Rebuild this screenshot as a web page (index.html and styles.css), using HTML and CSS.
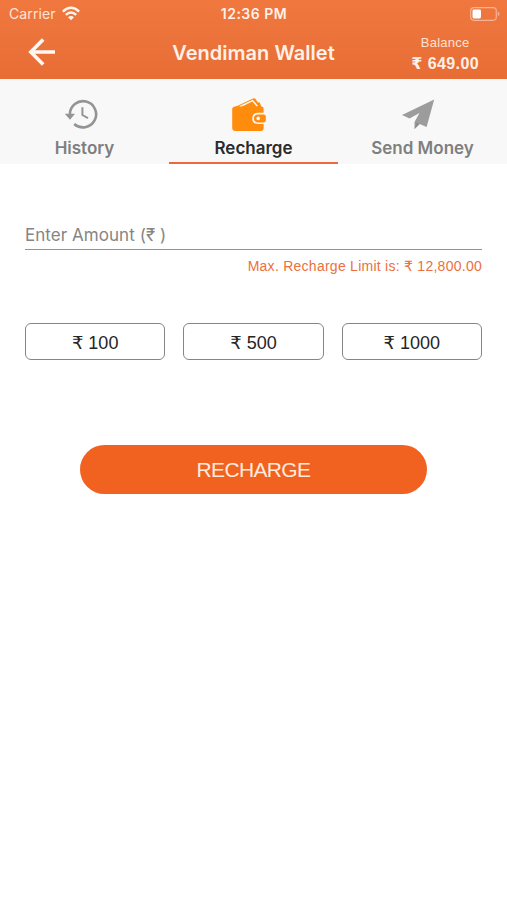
FILE: index.html
```html
<!DOCTYPE html>
<html lang="en">
<head>
<meta charset="utf-8">
<title>Vendiman Wallet</title>
<link rel="stylesheet" href="styles.css">
</head>
<body>
<header class="header">
  <div class="status">
    <div class="carrier"><span class="carrier-name">Carrier</span>
      <svg class="wifi" width="18" height="14" viewBox="0 0 18 14" fill="none" stroke="#fff5ee" stroke-width="2.4"><path d="M.9 4.6Q9-2.9 17.1 4.6M3.8 7.8Q9 3.2 14.2 7.8"/><path d="M6 10.2Q9 7.6 12 10.2L9 13.3Z" fill="#fff5ee" stroke="none"/></svg>
    </div>
    <time class="clock">12:36 PM</time>
    <svg class="battery" width="30" height="14" viewBox="0 0 30 14"><rect x=".7" y=".7" width="25.6" height="12.6" rx="3.2" fill="none" stroke="#f7b393" stroke-width="1.2"/><rect x="2.5" y="2.5" width="8.5" height="9" rx="1.4" fill="#fff"/><path d="M27.8 4.6Q31.2 7 27.8 9.4Z" fill="#f7b393"/></svg>
  </div>
  <div class="nav">
    <svg class="back" width="28" height="28" viewBox="0 0 28 28" fill="none" stroke="#fff7f2" stroke-width="3.6"><path d="M15.2 1.6 2.8 14 15.2 26.4M3 14H27"/></svg>
    <h1 class="title">Vendiman Wallet</h1>
    <div class="balance"><span class="balance-label">Balance</span><span class="balance-value">₹ 649.00</span></div>
  </div>
</header>
<nav class="tabs">
  <div class="tab">
    <svg class="icon history-icon" width="34" height="34" viewBox="0 0 34 34" fill="none" stroke="#949494" stroke-width="2.6"><path d="M5.9 17.4A13.1 13.1 0 1 1 10.2 27"/><path d="M.8 16.8H11L6 22.8Z" fill="#949494" stroke="none"/><path d="M18.4 10.3V18L24 21.2" stroke-width="2"/></svg>
    <span class="tab-label history-label">History</span>
  </div>
  <div class="tab active">
    <svg class="icon wallet-icon" width="34" height="34" viewBox="0 0 34 34"><path d="M3 10 21 1.4Q22.6.7 23.6 2L25.6 5.2 27.8 5.4 29.5 10Z" fill="#ff8c0c"/><path d="M7.6 9.8 20.6 3.6 25.4 9.2" fill="none" stroke="#f8f8f8" stroke-width="1.5"/><path d="M3.5 9.6H29Q31.6 9.6 31.6 12V31.2Q31.6 33.9 29 33.9H3.5Q.2 33.9.2 30.7V12.6Q.2 9.6 3.5 9.6Z" fill="#ff8c0c"/><path d="M34 15.8H25.8Q20.3 16 20.3 21.4T25.8 27H34Z" fill="#f8f8f8"/><path d="M31.8 17.4H26Q21.9 17.5 21.9 21.4T26 25.4H31.8Q33.8 25.4 33.8 23.4V19.4Q33.8 17.4 31.8 17.4Z" fill="#ff8c0c"/><circle cx="26.2" cy="21.4" r="1.8" fill="#f8f8f8"/></svg>
    <span class="tab-label recharge-label">Recharge</span>
  </div>
  <div class="tab">
    <svg class="icon plane-icon" width="34" height="34" viewBox="0 0 34 34"><path d="M32.2 2.6 24.6 30 17.6 26.9 12.5 32V25L17.5 16 7.5 21.5 0 18.1Z" fill="#9c9c9c"/><path d="M12.5 32 17.6 26.9 14.5 25.5Z" fill="#8d8d8d"/></svg>
    <span class="tab-label send-label">Send Money</span>
  </div>
</nav>
<main class="main">
  <div class="field"><span class="placeholder">Enter Amount (₹ )</span></div>
  <p class="limit"><span class="limit-text">Max. Recharge Limit is: ₹ 12,800.00</span></p>
  <div class="amounts">
    <button class="amount">₹ 100</button>
    <button class="amount">₹ 500</button>
    <button class="amount">₹ 1000</button>
  </div>
  <button class="submit">RECHARGE</button>
</main>
</body>
</html>
```
FILE: styles.css
```css
* { box-sizing: border-box; }
body { margin: 0; min-height: 900px; background: #fff; font-family: Inter, "Liberation Sans", sans-serif; }
svg { display: block; flex: none; overflow: visible; }
button { margin: 0; padding: 0; font-family: "Liberation Sans", "DejaVu Sans", sans-serif; }
.header { height: 79px; color: #fff1e7; background: linear-gradient(#f0783f, #e76d35); }
.status { height: 28px; display: grid; grid-template-columns: 1fr auto 1fr; align-items: center; padding: 0 8px 0 9px; }
.carrier { display: flex; align-items: center; gap: 6px; }
.carrier-name { font-size: 14px; line-height: 18px; letter-spacing: .1px; color: #ffe4d5; }
.clock { font-size: 14px; line-height: 18px; font-weight: 600; letter-spacing: .5px; }
.battery { justify-self: end; margin: -1px -1px 0 0; }
.nav { height: 51px; display: grid; grid-template-columns: 1fr auto 1fr; padding: 0 28px; }
.back { margin-top: 10px; }
.title { margin: 12px 0 0; font-size: 20px; line-height: 26px; font-weight: 600; letter-spacing: .03px; white-space: nowrap; }
.balance { justify-self: end; display: flex; flex-direction: column; align-items: center; margin-top: 6px; font-family: "Liberation Sans", "DejaVu Sans", sans-serif; }
.balance-label { font-size: 13px; line-height: 17px; letter-spacing: .25px; color: #ffe2d1; }
.balance-value { margin-top: 3px; font-size: 16px; line-height: 20px; font-weight: 700; letter-spacing: .4px; white-space: nowrap; }
.tabs { display: grid; grid-template-columns: repeat(3, 1fr); height: 85px; background: #f8f8f8; }
.tab { display: flex; flex-direction: column; align-items: center; padding-top: 18px; color: #7f7f7f; border-bottom: 2px solid transparent; }
.tab.active { color: #2b2b2b; border-color: #ee693a; }
.tab-label { margin-top: 6px; font-size: 17px; line-height: 22px; font-weight: 600; white-space: nowrap; }
.icon { margin-left: -8px; }
.wallet-icon { margin-left: -9px; }
.main { padding: 60px 25px 0; }
.field { height: 26px; border-bottom: 1px solid #949494; }
.placeholder { display: block; font-size: 17px; line-height: 22px; letter-spacing: .05px; color: #858585; }
.limit { margin: 8px 0 0; text-align: right; font: 14px/16px "Liberation Sans", "DejaVu Sans", sans-serif; letter-spacing: .26px; color: #ec703d; }
.amounts { display: grid; grid-template-columns: repeat(3, 1fr); gap: 18px; margin-top: 49px; }
.amount { height: 37px; padding-top: 2px; border: 1px solid #858585; border-radius: 6px; background: #fff; color: #252525; font-size: 18px; }
.submit { display: block; width: 347px; height: 49px; margin: 85px auto 0; padding-top: 1px; border: 0; border-radius: 25px; background: #f16221; color: #ffebdc; font-size: 21px; letter-spacing: -.65px; }
```
